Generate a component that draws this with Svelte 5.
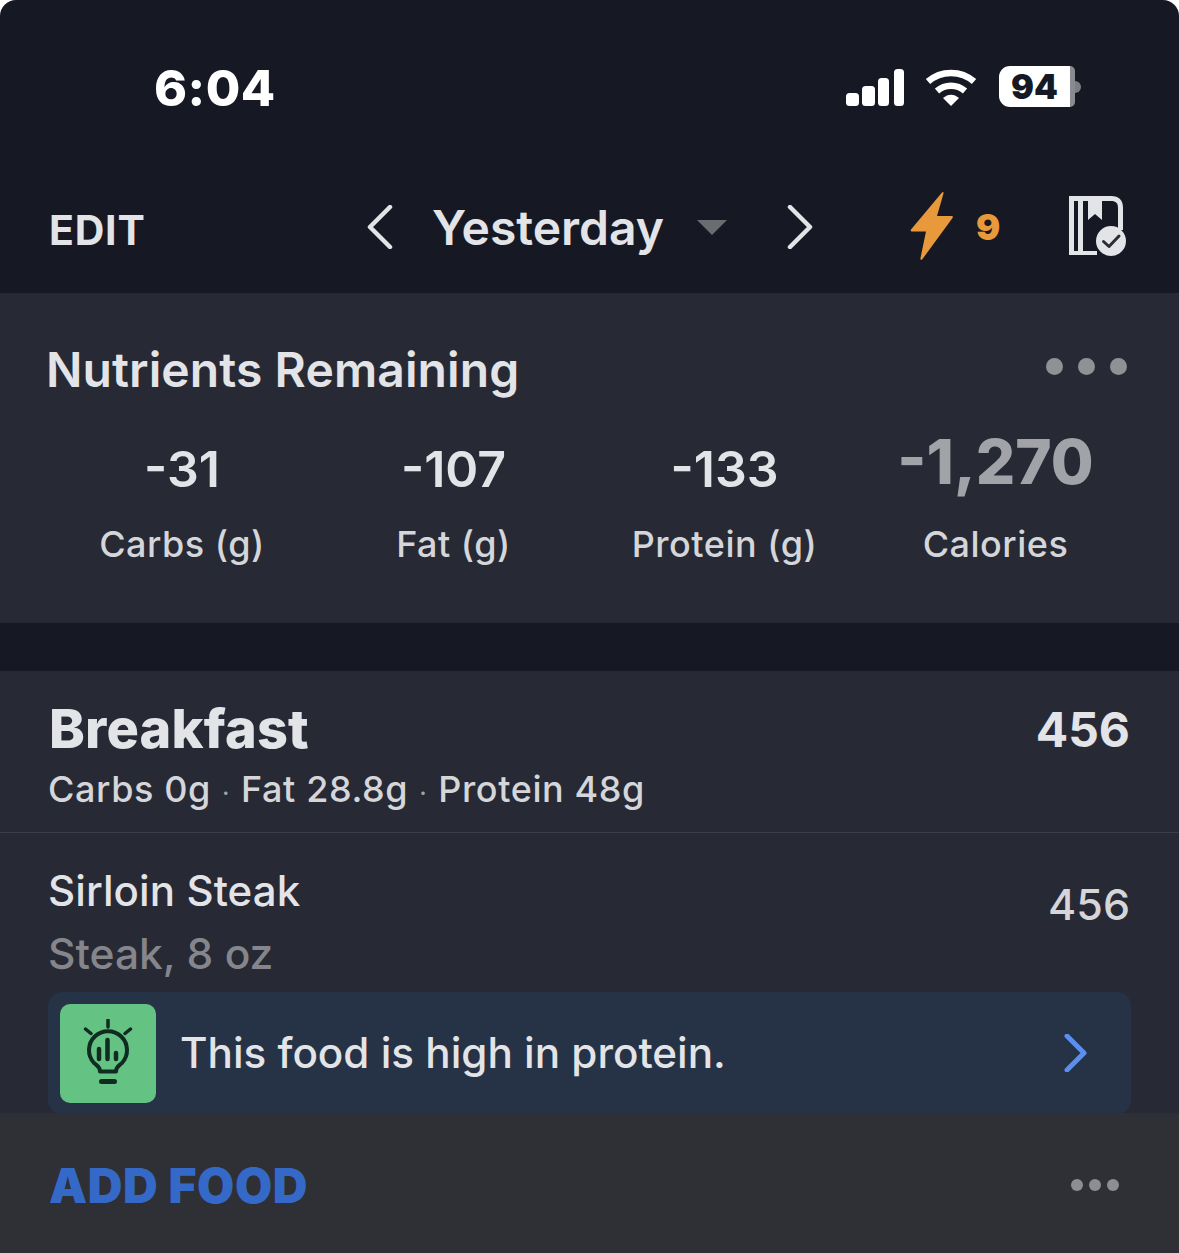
<script lang="ts">
	const macros = [
		{ value: '-31', label: 'Carbs (g)' },
		{ value: '-107', label: 'Fat (g)' },
		{ value: '-133', label: 'Protein (g)' }
	];
</script>

<div class="screen">
	<div class="status">
		<span class="time">6:04</span>
		<div class="status-icons">
			<svg class="signal" width="60" height="38" viewBox="0 0 60 38" fill="#fff">
				<rect x="1" y="24" width="13" height="13" rx="3.5" />
				<rect x="17" y="17" width="13" height="20" rx="3.5" />
				<rect x="33" y="9" width="11" height="28" rx="3.5" />
				<rect x="49" y="0" width="10" height="37" rx="3.5" />
			</svg>
			<svg class="wifi" width="52" height="38" viewBox="0 0 52 38">
				<path d="M3 12.5C16 1 36 1 49 12.5" fill="none" stroke="#fff" stroke-width="6.5" />
				<path d="M12 22C20 15 32 15 40 22" fill="none" stroke="#fff" stroke-width="6.5" />
				<path d="M18 29C23 24.5 29 24.5 34 29L26 37Z" fill="#fff" />
			</svg>
			<div class="battery">
				<div class="battery-body"><span>94</span></div>
				<div class="battery-rest"></div>
				<div class="battery-nub"></div>
			</div>
		</div>
	</div>

	<nav class="nav">
		<span class="edit">EDIT</span>
		<div class="date">
			<svg width="28" height="44" viewBox="0 0 28 44" fill="none" stroke="#e3e4e8" stroke-width="4.5" stroke-linecap="round" stroke-linejoin="round">
				<path d="M24 2 4 22l20 20" />
			</svg>
			<span class="date-label">Yesterday</span>
			<svg class="caret" width="30" height="15" viewBox="0 0 30 15"><path d="M0 0h30L15 15z" fill="#6b6c70" /></svg>
			<svg class="next" width="28" height="44" viewBox="0 0 28 44" fill="none" stroke="#e3e4e8" stroke-width="4.5" stroke-linecap="round" stroke-linejoin="round">
				<path d="M4 2l20 20L4 42" />
			</svg>
		</div>
		<div class="streak">
			<svg width="44" height="70" viewBox="0 0 44 70">
				<path d="M32 1.500 1 38.500c-.8 1.200 0 2 1.200 2H16L10.500 67c-.4 2 1 2.500 2 1L42.500 27c.8-1.200.3-2-1-2H27L33.500 2.500c.4-1.600-.6-2-1.500-1z" fill="#e8993c" />
			</svg>
			<span>9</span>
		</div>
		<svg class="diary" width="58" height="62" viewBox="0 0 58 62">
			<path d="M1 2h42c8 0 12 4 12 12v22h-5V14c0-5-2-7-7-7H34v19l-7-6-7 6V7h-5v50h14v4H1zM6 7v50h4V7z" fill="#e3e4e8" fill-rule="evenodd" />
			<circle cx="43" cy="47" r="15" fill="#e3e4e8" />
			<path d="M35.500 47.500l5.500 5 10-10.500" fill="none" stroke="#2b2d34" stroke-width="3" stroke-linecap="round" stroke-linejoin="round" />
		</svg>
	</nav>

	<section class="remaining">
		<div class="remaining-head">
			<h2>Nutrients Remaining</h2>
			<div class="dots"><i></i><i></i><i></i></div>
		</div>
		<div class="macros">
			{#each macros as m}
				<div class="macro">
					<span class="macro-value">{m.value}</span>
					<span class="macro-label">{m.label}</span>
				</div>
			{/each}
			<div class="macro">
				<span class="macro-value cal">-1,270</span>
				<span class="macro-label">Calories</span>
			</div>
		</div>
	</section>

	<section class="meal">
		<div class="meal-head">
			<div class="meal-row">
				<h1>Breakfast</h1>
				<span class="meal-total">456</span>
			</div>
			<p class="meal-macros">Carbs 0g<b>·</b>Fat 28.8g<b>·</b>Protein 48g</p>
		</div>
		<div class="food">
			<div class="food-text">
				<span class="food-name">Sirloin Steak</span>
				<span class="food-serving">Steak, 8 oz</span>
			</div>
			<span class="food-cal">456</span>
		</div>
		<div class="tip">
			<div class="tip-icon">
				<svg width="52" height="70" viewBox="0 -2 52 70" fill="none" stroke="#0f2b22" stroke-linecap="round">
					<path d="M26 -1v7M3.500 8l5.500 4.500M48.500 8L43 12.500" stroke-width="3.500" />
					<path d="M18 50.500c0-5-3-6-6-8.500a19 19 0 1 1 28 0c-3 2.500-6 3.500-6 8.500z" stroke-width="4" stroke-linejoin="round" />
					<path d="M17 28v10M25.500 19v19M34 32v6" stroke-width="4.500" />
					<path d="M19.500 60.500h13" stroke-width="5" />
				</svg>
			</div>
			<span class="tip-text">This food is high in protein.</span>
			<svg class="tip-chevron" width="24" height="38" viewBox="0 0 24 38" fill="none" stroke="#5b8fee" stroke-width="5" stroke-linecap="round" stroke-linejoin="round">
				<path d="M4 2l17 17L4 36" />
			</svg>
		</div>
	</section>

	<footer class="footer">
		<span class="add">ADD FOOD</span>
		<div class="dots small"><i></i><i></i><i></i></div>
	</footer>
</div>

<style>
	:global(body) {
		margin: 0;
		background: #fff;
	}

	.screen {
		width: 1179px;
		height: 1253px;
		display: flex;
		flex-direction: column;
		overflow: hidden;
		background: #161924;
		border-radius: 16px 16px 0 0;
		font-family: Inter, 'Liberation Sans', sans-serif;
		color: #e3e4e8;
	}

	/* status bar */
	.status {
		height: 170px;
		flex: none;
		display: flex;
		align-items: flex-start;
		justify-content: space-between;
		padding: 59px 98px 0 154px;
		box-sizing: border-box;
	}

	.time {
		font-size: 50px;
		font-weight: 800;
		line-height: 58px;
		color: #fff;
		letter-spacing: 0.5px;
	}

	.status-icons {
		display: flex;
		align-items: flex-start;
		margin-top: 10px;
	}

	.wifi {
		margin-left: 20px;
	}

	.battery {
		display: flex;
		align-items: center;
		margin-left: 22px;
		margin-top: -3px;
		height: 41px;
	}

	.battery-body {
		width: 71px;
		height: 41px;
		background: #fff;
		border-radius: 11px 0 0 11px;
		display: flex;
		align-items: center;
		justify-content: center;
		font-size: 34px;
		font-weight: 900;
		color: #161924;
	}

	.battery-rest {
		width: 5px;
		height: 41px;
		background: #8a8b90;
		border-radius: 0 8px 8px 0;
	}

	.battery-nub {
		width: 6px;
		height: 12px;
		background: #7d7e84;
		border-radius: 0 7px 7px 0;
	}

	/* nav */
	.nav {
		height: 123px;
		flex: none;
		display: flex;
		align-items: flex-start;
		padding: 0 53px 0 49px;
		box-sizing: border-box;
	}

	.edit {
		width: 317px;
		font-size: 41px;
		font-weight: 700;
		line-height: 48px;
		margin-top: 36px;
		letter-spacing: 0.8px;
		flex: none;
	}

	.date {
		display: flex;
		align-items: center;
		height: 44px;
		margin-top: 35px;
		flex: none;
	}

	.date-label {
		font-size: 48px;
		font-weight: 600;
		margin-left: 38px;
	}

	.caret {
		margin-left: 33px;
		margin-top: 0;
	}

	.next {
		margin-left: 59px;
	}

	.streak {
		display: flex;
		align-items: center;
		margin-left: 96px;
		margin-top: 21px;
		color: #e8993c;
		font-size: 36px;
		font-weight: 900;
		flex: none;
	}

	.streak span {
		margin-left: 22px;
		margin-top: 2px;
	}

	.diary {
		margin-left: auto;
		margin-top: 24px;
	}

	/* nutrients */
	.remaining {
		height: 330px;
		flex: none;
		background: #272a34;
		padding: 47px 52px 0 46px;
		box-sizing: border-box;
		margin-bottom: 48px;
	}

	.remaining-head {
		display: flex;
		justify-content: space-between;
		align-items: flex-start;
	}

	h2 {
		margin: 0;
		font-size: 48px;
		line-height: 60px;
		font-weight: 600;
		letter-spacing: 0.1px;
	}

	.dots {
		display: flex;
		gap: 15px;
		margin-top: 18px;
	}

	.dots i {
		width: 17px;
		height: 17px;
		border-radius: 50%;
		background: #909197;
	}

	.macros {
		display: grid;
		grid-template-columns: 272px 271px 271px 271px;
		margin: 44px 0 0 0;
	}

	.macro {
		display: flex;
		flex-direction: column;
		align-items: center;
		height: 122px;
		justify-content: flex-end;
	}

	.macro-value {
		font-size: 50px;
		font-weight: 600;
		line-height: 58px;
		margin-bottom: 2px;
	}

	.macro-value.cal {
		font-size: 62px;
		font-weight: 800;
		color: #a2a3a8;
		line-height: 72px;
		margin-top: -8px;
	}

	.macro-label {
		font-size: 36px;
		line-height: 44px;
		margin-top: 22px;
		color: #d5d6da;
		letter-spacing: 0.5px;
		font-weight: 450;
	}

	/* meal */
	.meal {
		flex: 1;
		min-height: 0;
		background: #272a34;
		overflow: hidden;
	}

	.meal-head {
		height: 162px;
		padding: 28px 49px 0;
		box-sizing: border-box;
		border-bottom: 1px solid #3c3e47;
	}

	.meal-row {
		display: flex;
		justify-content: space-between;
		align-items: center;
		height: 60px;
	}

	h1 {
		margin: 0;
		font-size: 54px;
		font-weight: 800;
		line-height: 60px;
		letter-spacing: 0.2px;
	}

	.meal-total {
		font-size: 48px;
		font-weight: 700;
		line-height: 60px;
		margin-top: 2px;
	}

	.meal-macros {
		margin: 8px 0 0 -1px;
		font-size: 36px;
		line-height: 44px;
		font-weight: 500;
		color: #d5d6da;
		letter-spacing: 0.6px;
	}

	.meal-macros b {
		font-weight: 400;
		margin: 0 11px;
		font-size: 26px;
		color: #a2a3a8;
	}

	.food {
		display: flex;
		justify-content: space-between;
		padding: 30px 49px 0 48px;
		height: 159px;
		box-sizing: border-box;
	}

	.food-text {
		display: flex;
		flex-direction: column;
	}

	.food-name {
		font-size: 42px;
		font-weight: 500;
		line-height: 56px;
		letter-spacing: 0.1px;
	}

	.food-serving {
		font-size: 42.5px;
		font-weight: 500;
		line-height: 56px;
		margin-top: 7px;
		color: #85868c;
	}

	.food-cal {
		font-size: 43px;
		font-weight: 500;
		line-height: 56px;
		margin-top: 13px;
		color: #d5d6da;
	}

	.tip {
		margin: 0 48px;
		height: 122px;
		padding: 12px 44px 0 12px;
		box-sizing: border-box;
		display: flex;
		align-items: flex-start;
		background: #263246;
		border-radius: 14px;
	}

	.tip-icon {
		width: 96px;
		height: 99px;
		flex: none;
		background: #64c283;
		border-radius: 10px;
		display: flex;
		align-items: center;
		justify-content: center;
	}

	.tip-text {
		font-size: 42.2px;
		font-weight: 500;
		line-height: 97px;
		margin-left: 24px;
	}

	.tip-chevron {
		margin-left: auto;
		margin-top: 30px;
	}

	/* footer */
	.footer {
		height: 140px;
		flex: none;
		background: #2f3036;
		display: flex;
		align-items: center;
		justify-content: space-between;
		padding: 4px 60px 0 49px;
		box-sizing: border-box;
	}

	.add {
		font-size: 48px;
		font-weight: 900;
		color: #3569c8;
		letter-spacing: 0.6px;
	}

	.dots.small {
		gap: 6px;
		margin: 0;
	}

	.dots.small i {
		width: 12px;
		height: 12px;
		background: #8d8e94;
	}
</style>
